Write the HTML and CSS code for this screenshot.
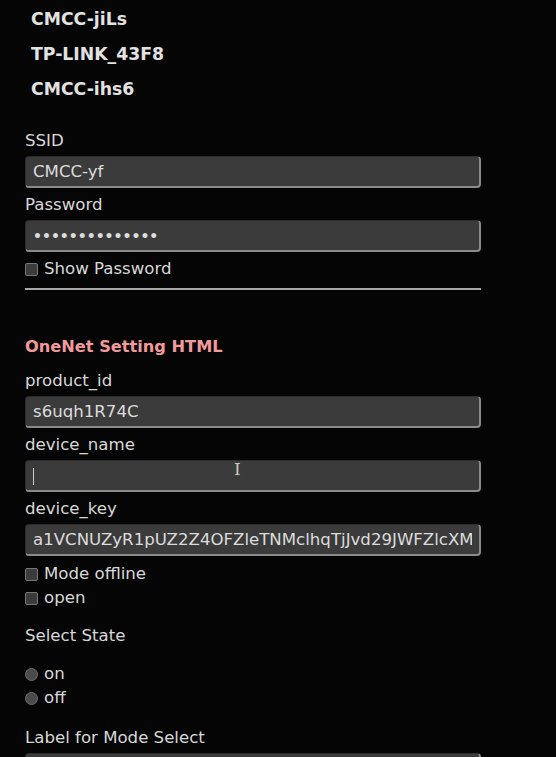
FILE: index.html
```html
<!DOCTYPE html>
<html>
<head>
<meta charset="utf-8">
<link rel="stylesheet" href="styles.css">
</head>
<body>
<div class="page">
  <ul class="networks">
    <li>CMCC-jiLs</li>
    <li>TP-LINK_43F8</li>
    <li>CMCC-ihs6</li>
  </ul>

  <form class="form">
    <label class="lbl first">SSID</label>
    <input class="field" type="text" value="CMCC-yf">
    <label class="lbl">Password</label>
    <input class="field pw" type="password" value="12345678901234">
    <label class="check"><input type="checkbox" class="box"> Show Password</label>
    <div class="rule"></div>

    <h3 class="heading">OneNet Setting HTML</h3>
    <label class="lbl">product_id</label>
    <input class="field" type="text" value="s6uqh1R74C">
    <label class="lbl">device_name</label>
    <div class="field-wrap">
      <input class="field" type="text" value="">
      <span class="caret"></span>
      <span class="ibeam">I</span>
    </div>
    <label class="lbl">device_key</label>
    <input class="field" type="text" value="a1VCNUZyR1pUZ2Z4OFZleTNMclhqTjJvd29JWFZlcXM=">
    <label class="check tight"><input type="checkbox" class="box"> Mode offline</label>
    <label class="check tight2"><input type="checkbox" class="box"> open</label>

    <div class="lbl section">Select State</div>
    <label class="check radio-first"><input type="radio" name="st" class="rad"> on</label>
    <label class="check tight2"><input type="radio" name="st" class="rad"> off</label>

    <div class="lbl section2">Label for Mode Select</div>
    <select class="field sel"><option></option></select>
  </form>
</div>
</body>
</html>
```

FILE: styles.css
```css
* { box-sizing: border-box; }
html, body {
  margin: 0;
  padding: 0;
  background: #050505;
  height: 100%;
  overflow: hidden;
}
body {
  font-family: "DejaVu Sans", Verdana, sans-serif;
  font-size: 16.6px;
  color: #d8d8d8;
}
.page {
  padding: 0 75px 0 25px;
}
.networks {
  list-style: none;
  margin: 0;
  padding: 2px 0 0 6px;
}
.networks li {
  font-weight: bold;
  font-size: 17.3px;
  line-height: 35px;
  height: 35px;
  color: #e2e2e2;
}
.form {
  display: flex;
  flex-direction: column;
  width: 456px;
}
.lbl {
  display: block;
  line-height: 20px;
  margin: 7px 0 5px;
  color: #d8d8d8;
}
.lbl.first { margin-top: 24px; margin-bottom: 5px; }
.field {
  display: block;
  width: 456px;
  height: 32px;
  background: #3b3b3b;
  border-style: solid;
  border-width: 1px 2px 2px 1px;
  border-color: #2c2c2c #8a8a8a #8a8a8a #2c2c2c;
  border-radius: 4px;
  color: #dcdcdc;
  font-family: "DejaVu Sans", Verdana, sans-serif;
  font-size: 16.6px;
  padding: 0 7px;
  margin: 0;
  outline: none;
}
.pw {
  font-size: 14px;
  font-weight: bold;
}
.field-wrap {
  position: relative;
}
.caret {
  position: absolute;
  left: 8px;
  top: 8px;
  width: 1px;
  height: 17px;
  background: #d0d0d0;
}
.ibeam {
  position: absolute;
  left: 209px;
  top: 0;
  font-family: "DejaVu Serif", serif;
  font-size: 17px;
  line-height: 18px;
  color: #c8c8c8;
}
.check {
  display: flex;
  align-items: center;
  gap: 6px;
  line-height: 20px;
  margin-top: 7px;
  color: #d8d8d8;
}
.check.tight { margin-top: 8px; }
.check.tight2 { margin-top: 4px; }
.check.radio-first { margin-top: 13px; }
.box {
  appearance: none;
  -webkit-appearance: none;
  width: 13px;
  height: 13px;
  margin: 0;
  background: #3c3c3c;
  border: 1px solid #777;
  border-radius: 2px;
}
.rad {
  appearance: none;
  -webkit-appearance: none;
  width: 13px;
  height: 13px;
  margin: 0;
  background: #4a4a4a;
  border: 1px solid #6e6e6e;
  border-radius: 50%;
}
.rule {
  height: 2px;
  background: #a8a8a8;
  margin-top: 9px;
}
.heading {
  margin: 46px 0 6px;
  font-size: 16.2px;
  line-height: 22px;
  font-weight: bold;
  color: #f29a9a;
}
.section { margin-top: 18px; }
.section2 { margin-top: 20px; margin-bottom: 5px; }
.sel {
  height: 40px;
  appearance: none;
  -webkit-appearance: none;
}
```
